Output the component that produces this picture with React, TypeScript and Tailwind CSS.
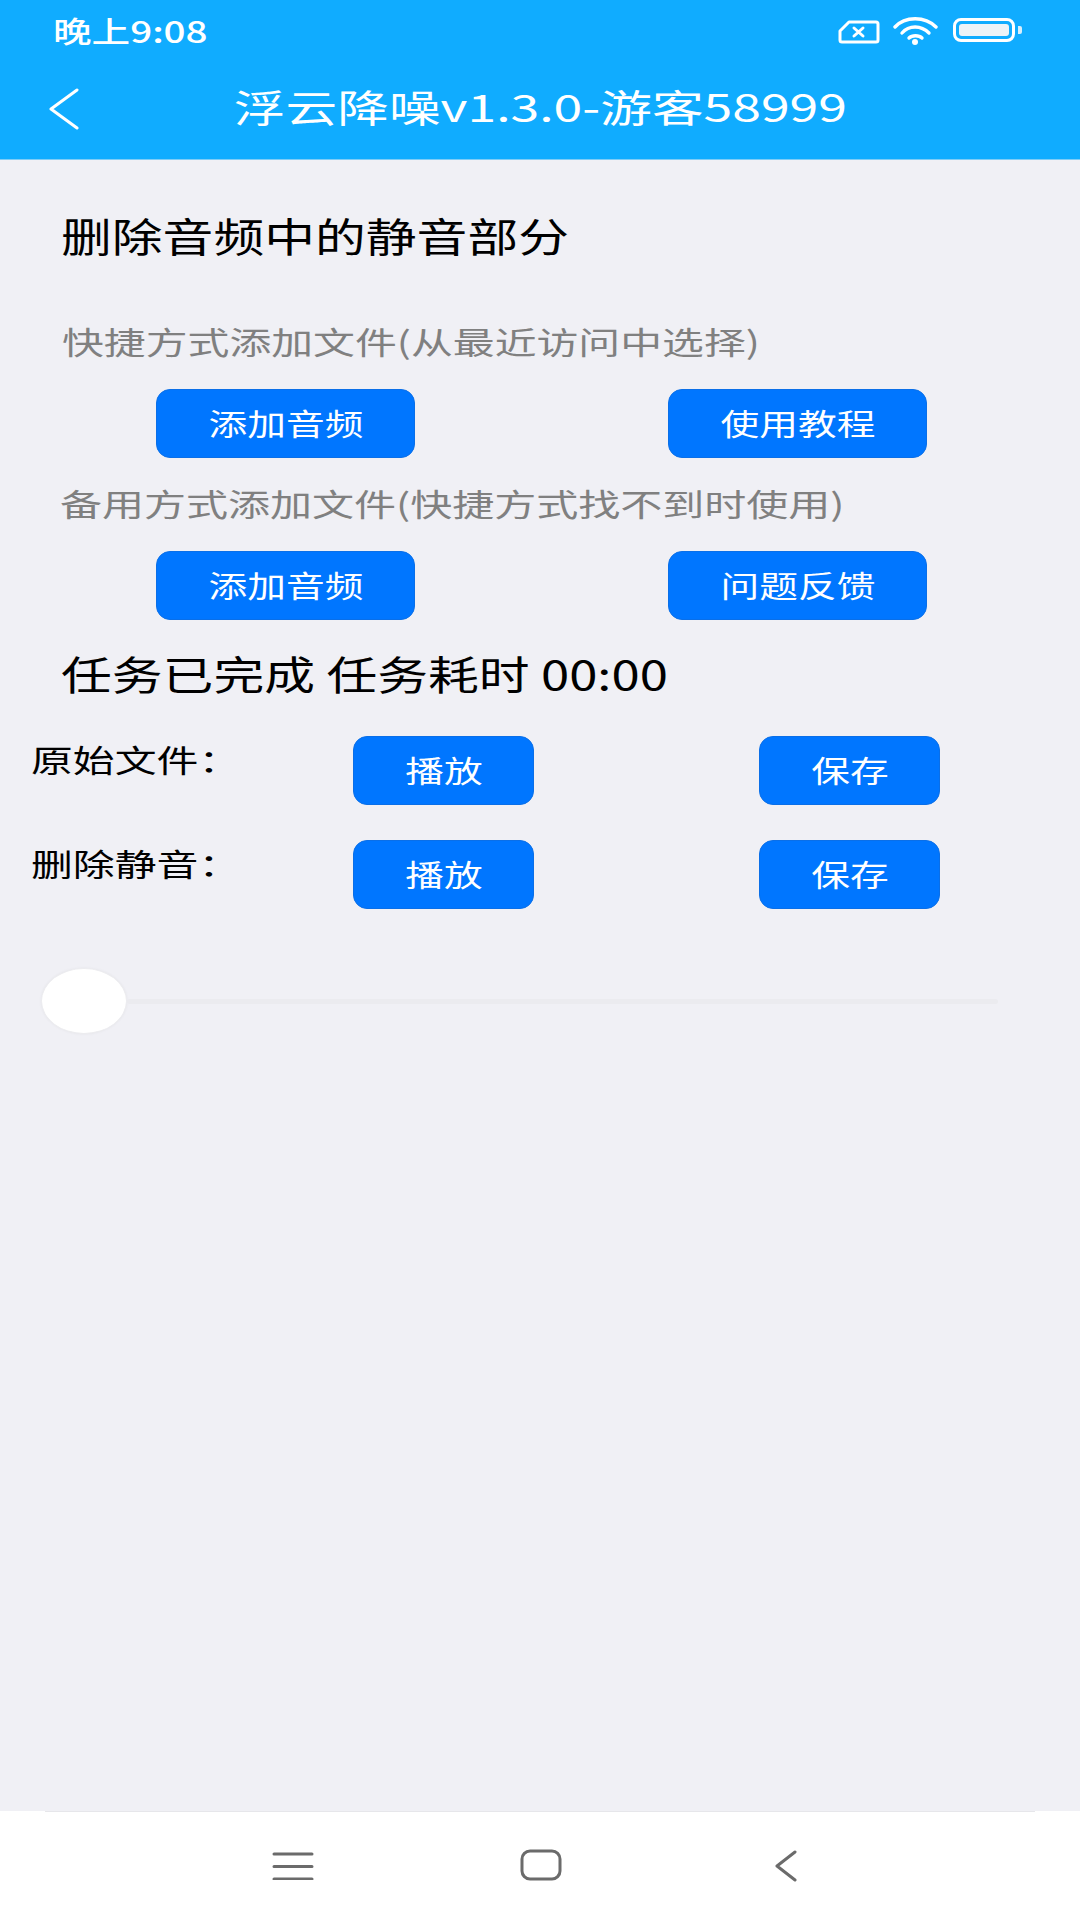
const FONT = "font-['Noto_Sans_CJK_SC','Noto_Sans',sans-serif]";

function BlueButton({ label, className }: { label: string; className: string }) {
  return (
    <button className={`flex h-[69px] items-center justify-center rounded-[14px] border border-[#0a6fe8] bg-[#0076ff] pb-[4px] text-[30px] text-white ${className}`}>
      <span className="inline-block scale-x-[1.29] whitespace-nowrap leading-none">{label}</span>
    </button>
  );
}

function StatusIcons() {
  return (
    <div className="flex items-center">
      <svg className="mt-[4px]" width="42" height="24" viewBox="0 0 42 24" fill="none" stroke="white" strokeWidth="3" strokeLinejoin="round">
        <path d="M2 11 L11 2 H38 a2 2 0 0 1 2 2 V20 a2 2 0 0 1 -2 2 H4 a2 2 0 0 1 -2 -2 Z" />
        <path d="M16 8 L25 16 M25 8 L16 16" strokeLinecap="round" />
      </svg>
      <svg className="ml-[13px] mt-[1px]" width="46" height="28" viewBox="0 0 46 28" fill="none" stroke="white" strokeWidth="3.4" strokeLinecap="round">
        <path d="M2 10 C12 -1 32 -1 43 10" />
        <path d="M9 16 C16 8 28 8 36 16" />
        <circle cx="22" cy="25" r="3" fill="white" stroke="none" />
        <path d="M16 21 C19 18 26 18 29 21" />
      </svg>
      <div className="ml-[14px] flex items-center">
        <div className="h-[24px] w-[62px] rounded-[8px] border-[3px] border-white p-[3px]">
          <div className="h-full w-full rounded-[3px] bg-[#edf3f7]" />
        </div>
        <div className="ml-[3px] h-[8px] w-[4px] rounded-r-[2px] bg-[#d8eefb]" />
      </div>
    </div>
  );
}

export default function App() {
  return (
    <div className={`flex h-[1920px] w-[1080px] flex-col overflow-hidden bg-[#f0f0f5] ${FONT}`}>
      <header className="h-[160px] shrink-0 border-b border-[#7fcdf7] bg-[#10acff] text-white">
        <div className="flex h-[60px] items-center justify-between pl-[53px] pr-[58px]">
          <span className="inline-block origin-left scale-x-[1.33] whitespace-nowrap text-[29px] font-medium leading-none">晚上9:08</span>
          <StatusIcons />
        </div>
        <div className="relative flex h-[96px] items-center justify-center pb-[4px]">
          <svg className="absolute left-[48px] top-[28px]" width="32" height="42" viewBox="0 0 32 42" fill="none" stroke="white" strokeWidth="3" strokeLinecap="round" strokeLinejoin="round">
            <path d="M29 2 L3 21 L29 40" />
          </svg>
          <span className="inline-block scale-x-[1.36] whitespace-nowrap text-[38px] leading-none">浮云降噪v1.3.0-游客58999</span>
        </div>
      </header>

      <main className="flex-1">
        <h1 className="ml-[61px] mt-[53px] origin-left scale-x-[1.27] whitespace-nowrap text-[40px] leading-[44px] text-black">删除音频中的静音部分</h1>

        <p className="ml-[62px] mt-[64px] origin-left scale-x-[1.35] whitespace-nowrap text-[31px] leading-[40px] text-[#808080]">快捷方式添加文件(从最近访问中选择)</p>
        <div className="ml-[156px] mt-[28px] flex gap-[253px]">
          <BlueButton label="添加音频" className="w-[259px]" />
          <BlueButton label="使用教程" className="w-[259px]" />
        </div>

        <p className="ml-[60px] mt-[25px] origin-left scale-x-[1.355] whitespace-nowrap text-[31px] leading-[40px] text-[#808080]">备用方式添加文件(快捷方式找不到时使用)</p>
        <div className="ml-[156px] mt-[28px] flex gap-[253px]">
          <BlueButton label="添加音频" className="w-[259px]" />
          <BlueButton label="问题反馈" className="w-[259px]" />
        </div>

        <p className="ml-[61px] mt-[29px] origin-left scale-x-[1.27] whitespace-nowrap text-[40px] leading-[48px] text-black">任务已完成 任务耗时 00:00</p>

        <div className="mt-[39px] flex">
          <span className="ml-[31px] mt-[3px] w-[322px] origin-left scale-x-[1.35] whitespace-nowrap text-[31px] leading-[40px] text-black">原始文件：</span>
          <BlueButton label="播放" className="w-[181px]" />
          <BlueButton label="保存" className="ml-[225px] w-[181px]" />
        </div>
        <div className="mt-[35px] flex">
          <span className="ml-[31px] mt-[3px] w-[322px] origin-left scale-x-[1.35] whitespace-nowrap text-[31px] leading-[40px] text-black">删除静音：</span>
          <BlueButton label="播放" className="w-[181px]" />
          <BlueButton label="保存" className="ml-[225px] w-[181px]" />
        </div>

        <div className="ml-[41px] mt-[59px] flex w-[957px] items-center">
          <div className="h-[66px] w-[86px] shrink-0 rounded-[50%] border border-[#ececef] bg-white shadow-[0_0_3px_rgba(0,0,0,0.05)]" />
          <div className="h-[5px] flex-1 rounded-full bg-[#ebebef]" />
        </div>
      </main>

      <nav className="relative flex h-[109px] shrink-0 bg-white">
        <div className="absolute left-[45px] right-[45px] top-0 h-px bg-[#e6e6ea]" />
        <svg className="ml-[272px] mt-[41px]" width="42" height="28" viewBox="0 0 42 28" fill="none" stroke="#6b6b6b" strokeWidth="3" strokeLinecap="round">
          <path d="M2 2 H40 M2 14.5 H40 M2 27 H40" />
        </svg>
        <svg className="ml-[206px] mt-[38px]" width="42" height="32" viewBox="0 0 42 32" fill="none" stroke="#6b6b6b" strokeWidth="3">
          <rect x="2" y="2" width="38" height="28" rx="8" />
        </svg>
        <svg className="ml-[212px] mt-[39px]" width="24" height="32" viewBox="0 0 24 32" fill="none" stroke="#6b6b6b" strokeWidth="3" strokeLinecap="round" strokeLinejoin="round">
          <path d="M21 2 L3 16 L21 30" />
        </svg>
      </nav>
    </div>
  );
}
